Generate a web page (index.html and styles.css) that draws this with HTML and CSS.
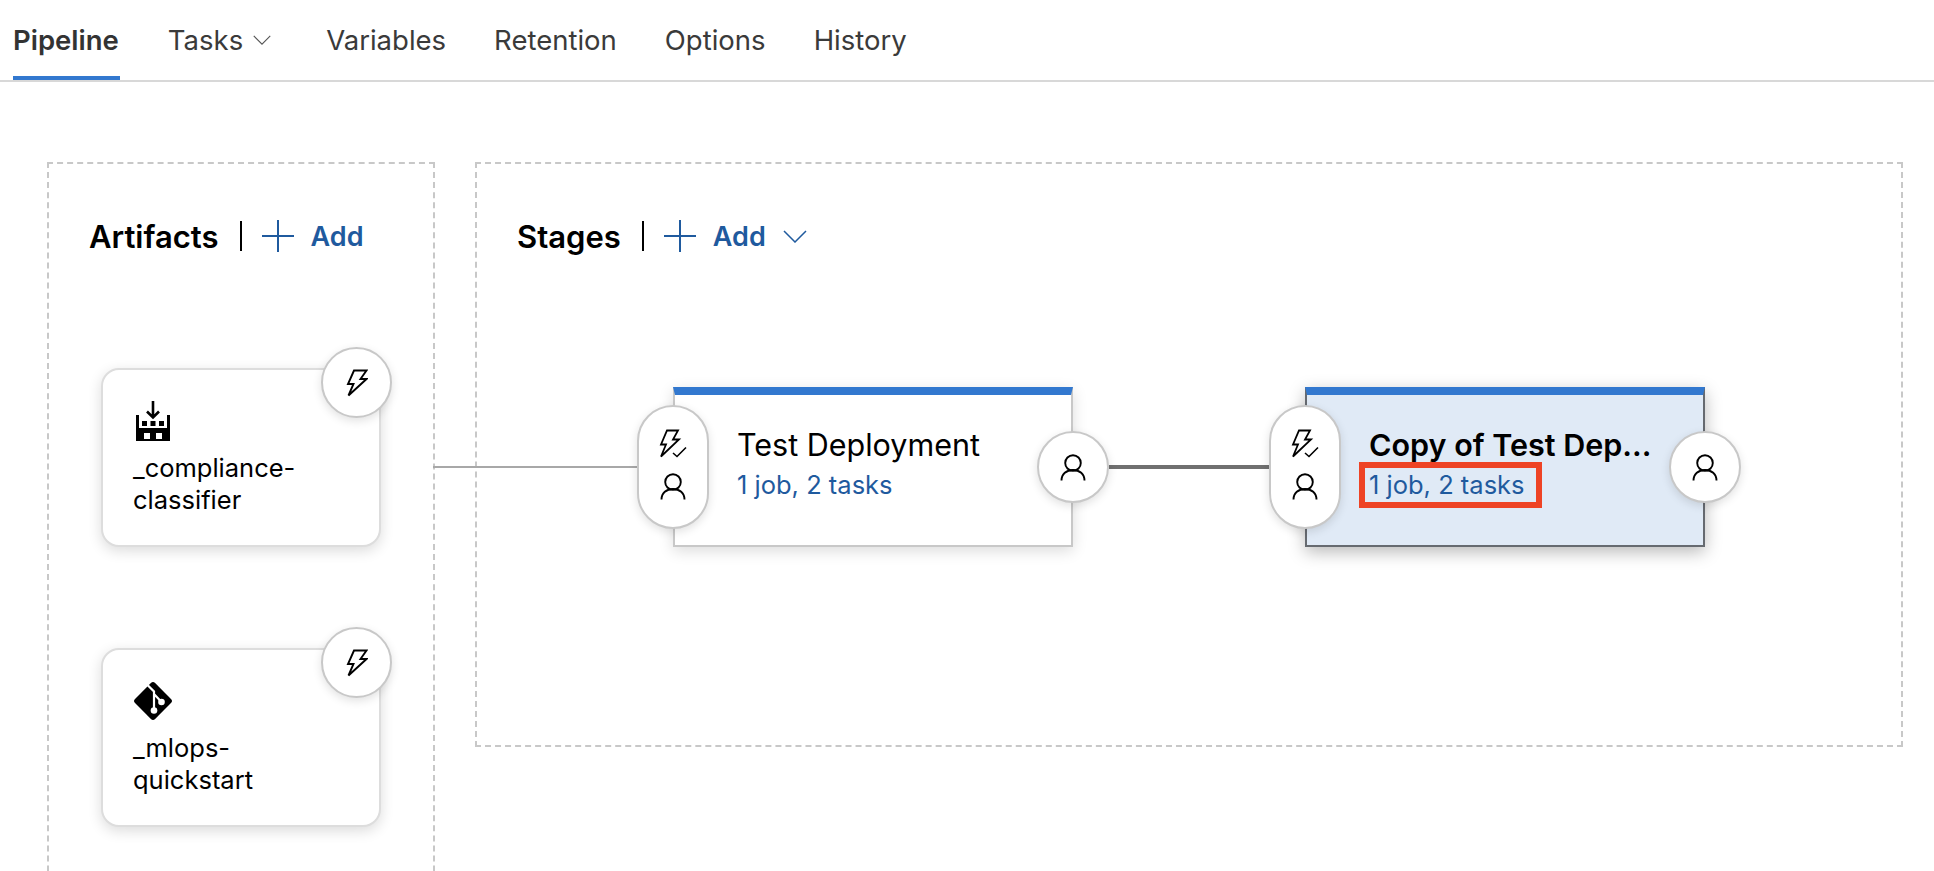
FILE: index.html
```html
<!DOCTYPE html>
<html lang="en">
<head>
  <meta charset="UTF-8" />
  <title>Pipeline</title>
  <link rel="stylesheet" href="styles.css">
</head>
<body>
  <svg class="sprites" width="0" height="0">
    <symbol id="bolt" viewBox="0 0 22 28">
      <path d="M8 1.500h12.500l-6 8.500h6L2.500 26.500 7.500 15H2z" fill="none" stroke="currentColor" stroke-width="1.900" stroke-linejoin="miter"/>
    </symbol>
    <symbol id="bolt-check" viewBox="0 0 28 29">
      <path d="M8 1.500H19L14 10.500h6L2 27.500 7 15.500H2z" fill="none" stroke="currentColor" stroke-width="1.800"/>
      <path d="M14 24l4 3.500 9-9" fill="none" stroke="currentColor" stroke-width="1.600"/>
    </symbol>
    <symbol id="person" viewBox="0 0 26 27">
      <circle cx="13" cy="9" r="7.800" fill="none" stroke="currentColor" stroke-width="1.900"/>
      <path d="M1.500 26.500c0-6.500 5-10.500 11.500-10.500s11.500 4 11.500 10.500" fill="none" stroke="currentColor" stroke-width="1.900"/>
    </symbol>
    <symbol id="plus" viewBox="0 0 32 32">
      <path d="M16 0v32M0 16h32" fill="none" stroke="currentColor" stroke-width="2"/>
    </symbol>
    <symbol id="chevron" viewBox="0 0 24 13">
      <path d="M1 1l11 11L23 1" fill="none" stroke="currentColor" stroke-width="1.500"/>
    </symbol>
  </svg>

  <nav class="tabs">
    <a class="tab tab-active">Pipeline</a>
    <a class="tab tab-menu">Tasks <svg class="tab-chevron"><use href="#chevron"/></svg></a>
    <a class="tab">Variables</a>
    <a class="tab">Retention</a>
    <a class="tab">Options</a>
    <a class="tab">History</a>
  </nav>

  <main class="canvas">
    <section class="panel panel-artifacts">
      <div class="panel-head">
        <h2>Artifacts</h2>
        <span class="head-sep"></span>
        <a class="add"><svg class="add-plus"><use href="#plus"/></svg>Add</a>
      </div>
      <div class="artifact-list">
        <div class="artifact">
          <svg class="artifact-icon" viewBox="-3 0 40 40">
            <path d="M17 0v16M11 10.500l6 6 6-6" fill="none" stroke="#000" stroke-width="2.600"/>
            <path fill-rule="evenodd" d="M0 14h3v13h28V14h3v26H0zM8 32v6h6v-6zM20 32v6h6v-6z"/>
            <path d="M6 20h5v5H6zM14.500 20h5v5h-5zM23 20h5v5h-5z"/>
          </svg>
          <p>_compliance-<br>classifier</p>
          <span class="trigger"><svg class="bolt"><use href="#bolt"/></svg></span>
        </div>
        <div class="artifact">
          <svg class="artifact-icon" viewBox="0 0 40 40">
            <rect x="5.800" y="5.800" width="28.400" height="28.400" rx="3" transform="rotate(45 20 20)"/>
            <path d="M14 3.500L21 10.500V30M21 13l7 7.500" fill="none" stroke="#fff" stroke-width="2.200"/>
            <circle cx="21" cy="29.500" r="3.300" fill="#fff"/>
            <circle cx="28.500" cy="21" r="3.300" fill="#fff"/>
          </svg>
          <p>_mlops-<br>quickstart</p>
          <span class="trigger"><svg class="bolt"><use href="#bolt"/></svg></span>
        </div>
      </div>
    </section>

    <section class="panel panel-stages">
      <div class="panel-head">
        <h2>Stages</h2>
        <span class="head-sep"></span>
        <a class="add"><svg class="add-plus"><use href="#plus"/></svg>Add</a>
        <svg class="add-chevron"><use href="#chevron"/></svg>
      </div>
      <div class="stage-row">
        <div class="stage">
          <span class="connector connector-in"></span>
          <span class="pre-deploy">
            <svg class="bolt-check"><use href="#bolt-check"/></svg>
            <svg class="person"><use href="#person"/></svg>
          </span>
          <div class="stage-name">Test Deployment</div>
          <a class="stage-jobs">1 job, 2 tasks</a>
          <span class="post-deploy"><svg class="person"><use href="#person"/></svg></span>
        </div>
        <div class="stage stage-selected">
          <span class="connector connector-dark"></span>
          <span class="pre-deploy">
            <svg class="bolt-check"><use href="#bolt-check"/></svg>
            <svg class="person"><use href="#person"/></svg>
          </span>
          <div class="stage-name">Copy of Test Dep...</div>
          <a class="stage-jobs stage-jobs-marked">1 job, 2 tasks</a>
          <span class="post-deploy"><svg class="person"><use href="#person"/></svg></span>
        </div>
      </div>
    </section>
  </main>
</body>
</html>
```

FILE: styles.css
```css
html, body {
  height: 871px;
  overflow: hidden;
}

body {
  margin: 0;
  background-color: #ffffff;
  color: #000000;
  font-family: 'Inter', 'Liberation Sans', sans-serif;
}

.sprites {
  position: absolute;
}

/* tabs */
.tabs {
  display: flex;
  gap: 48px;
  height: 80px;
  padding-left: 13px;
  border-bottom: 2px solid #d8d8d8;
}

.tab {
  display: flex;
  align-items: center;
  height: 76px;
  padding-top: 4px;
  font-size: 27.500px;
  color: #3a3a3a;
  box-sizing: border-box;
}

.tab-active {
  height: 80px;
  padding-right: 1px;
  font-weight: 600;
  color: #333333;
  border-bottom: 4px solid #3278cf;
}

.tab-menu {
  margin-right: 7px;
}

.tab-chevron {
  width: 18px;
  height: 10px;
  margin-left: 10px;
  color: #555555;
}

/* panels */
.canvas {
  display: flex;
  gap: 40px;
  padding: 80px 0 0 47px;
}

.panel {
  box-sizing: border-box;
  border: 2px dashed #c8c8c8;
}

.panel-artifacts {
  width: 388px;
  height: 800px;
}

.panel-stages {
  width: 1428px;
  height: 585px;
}

.panel-head {
  display: flex;
  align-items: center;
  height: 40px;
  margin: 52px 0 0 40px;
}

.panel-head h2 {
  margin: 0;
  font-size: 31px;
  font-weight: 600;
}

.head-sep {
  width: 2px;
  height: 30px;
  margin: 0 20px 0 21px;
  background-color: #000000;
}

.add {
  display: flex;
  align-items: center;
  font-size: 27px;
  font-weight: 600;
  color: #1f5a9e;
}

.add-plus {
  width: 32px;
  height: 32px;
  margin-right: 17px;
}

.add-chevron {
  width: 24px;
  height: 13px;
  margin-left: 17px;
  color: #1f5a9e;
}

/* artifacts */
.artifact-list {
  display: flex;
  flex-direction: column;
  gap: 101px;
  margin: 112px 0 0 52px;
}

.artifact {
  position: relative;
  box-sizing: border-box;
  width: 280px;
  height: 179px;
  padding: 31px 0 0 30px;
  background-color: #ffffff;
  border: 2px solid #dddddd;
  border-radius: 18px;
  box-shadow: 0 4px 14px rgba(0, 0, 0, 0.14);
}

.artifact-icon {
  display: block;
  width: 40px;
  height: 40px;
}

.artifact p {
  margin: 11px 0 0 0;
  font-size: 25.500px;
  line-height: 32px;
}

.trigger,
.post-deploy,
.pre-deploy {
  position: absolute;
  display: flex;
  align-items: center;
  justify-content: center;
  box-sizing: border-box;
  background-color: #ffffff;
  border: 2px solid #c8c8c8;
  box-shadow: 0 3px 10px rgba(0, 0, 0, 0.12);
}

.trigger {
  top: -23px;
  right: -13px;
  width: 71px;
  height: 71px;
  border-radius: 50%;
}

.bolt {
  width: 22px;
  height: 28px;
}

/* stages */
.stage-row {
  display: flex;
  gap: 232px;
  margin: 131px 0 0 196px;
}

.stage {
  position: relative;
  box-sizing: border-box;
  width: 400px;
  height: 160px;
  padding: 32px 0 0 62px;
  background-color: #ffffff;
  border: 2px solid #c8c8c8;
  border-top: 8px solid #3278cf;
  box-shadow: 0 4px 14px rgba(0, 0, 0, 0.14);
}

.stage-selected {
  background-color: #e0eaf6;
  border-color: #666a70;
  border-top-color: #3278cf;
  box-shadow: 0 5px 16px rgba(0, 0, 0, 0.28);
}

.stage-name {
  font-size: 30.500px;
  line-height: 36px;
  white-space: nowrap;
}

.stage-selected .stage-name {
  font-weight: 600;
}

.stage-jobs {
  display: inline-block;
  margin-top: 6px;
  font-size: 25.500px;
  line-height: 32px;
  color: #1f5a9e;
}

/* the red box drawn over the screenshot */
.stage-jobs-marked {
  position: relative;
}

.stage-jobs-marked::after {
  content: "";
  position: absolute;
  top: -7px;
  left: -10px;
  width: 183px;
  height: 46px;
  box-sizing: border-box;
  border: 6px solid #ee4325;
}

.pre-deploy {
  top: 10px;
  left: -38px;
  flex-direction: column;
  gap: 15px;
  width: 72px;
  height: 124px;
  padding-bottom: 6px;
  border-radius: 36px;
  z-index: 1;
}

.post-deploy {
  top: 36px;
  right: -38px;
  width: 72px;
  height: 72px;
  border-radius: 50%;
  z-index: 1;
}

.bolt-check {
  width: 28px;
  height: 29px;
}

.person {
  width: 26px;
  height: 27px;
}

.connector {
  position: absolute;
  top: 71px;
  height: 2px;
  background-color: #a8a8a8;
}

.connector-in {
  left: -242px;
  width: 241px;
}

.connector-dark {
  top: 70px;
  left: -198px;
  width: 197px;
  height: 4px;
  background-color: #707070;
}
```
